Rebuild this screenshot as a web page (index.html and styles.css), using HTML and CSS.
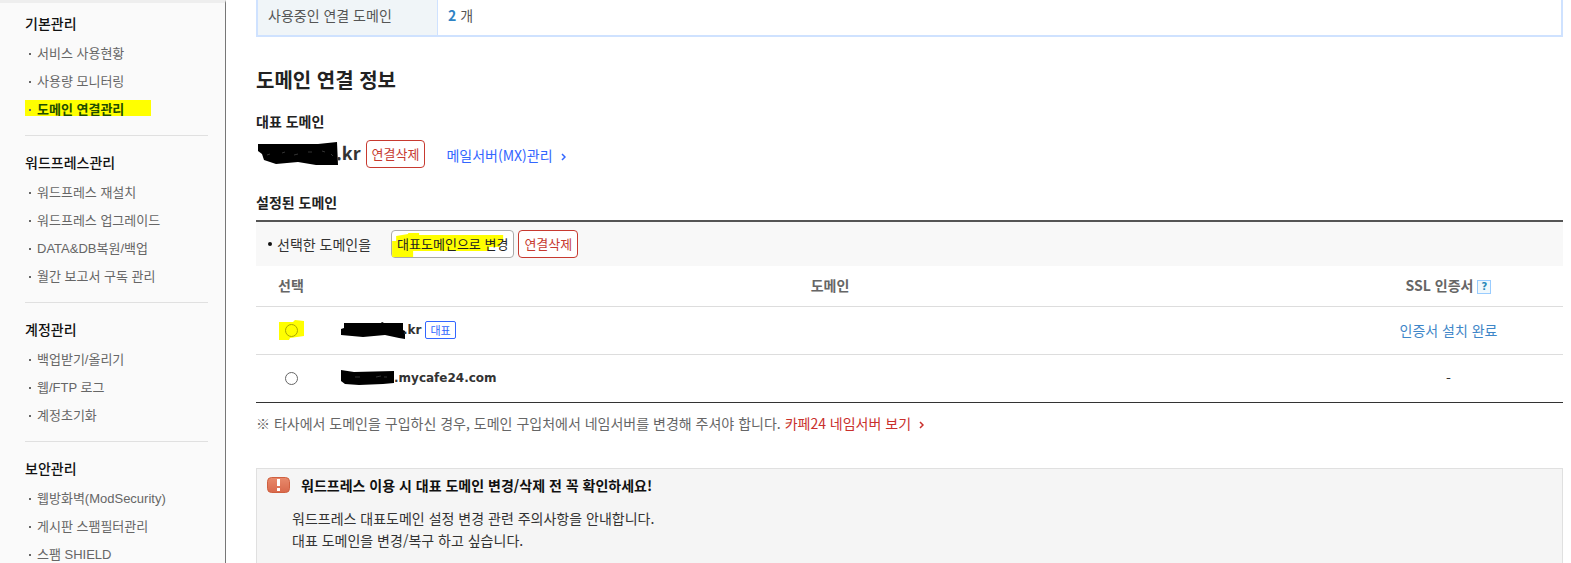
FILE: index.html
```html
<!DOCTYPE html>
<html lang="ko">
<head>
<meta charset="utf-8">
<title>도메인 연결관리</title>
<link rel="stylesheet" href="styles.css">
</head>
<body>
<div class="page">
  <nav class="sidebar">
    <section class="group">
      <h3>기본관리</h3>
      <ul>
        <li><a href="#">서비스 사용현황</a></li>
        <li><a href="#">사용량 모니터링</a></li>
        <li class="current"><a href="#">도메인 연결관리</a></li>
      </ul>
    </section>
    <section class="group">
      <h3>워드프레스관리</h3>
      <ul>
        <li><a href="#">워드프레스 재설치</a></li>
        <li><a href="#">워드프레스 업그레이드</a></li>
        <li><a href="#">DATA&amp;DB복원/백업</a></li>
        <li><a href="#">월간 보고서 구독 관리</a></li>
      </ul>
    </section>
    <section class="group">
      <h3>계정관리</h3>
      <ul>
        <li><a href="#">백업받기/올리기</a></li>
        <li><a href="#">웹/FTP 로그</a></li>
        <li><a href="#">계정초기화</a></li>
      </ul>
    </section>
    <section class="group">
      <h3>보안관리</h3>
      <ul>
        <li><a href="#">웹방화벽(ModSecurity)</a></li>
        <li><a href="#">게시판 스팸필터관리</a></li>
        <li><a href="#">스팸 SHIELD</a></li>
      </ul>
    </section>
  </nav>

  <main class="content">
    <table class="summary">
      <tr><th scope="row">사용중인 연결 도메인</th><td><strong>2</strong> 개</td></tr>
    </table>

    <h1>도메인 연결 정보</h1>

    <h2>대표 도메인</h2>
    <div class="primary">
      <svg class="redact" width="82" height="26" viewBox="0 0 82 26" aria-hidden="true"><path d="M0 3L50 3L60 3L79 1L80 24L58 24L40 21L18 23L6 19L4 13L0 10Z"/><path class="scratch" d="M9 14l3-1M24 12l3-1M36 14l4-1M50 11h4M64 10l3 1M73 13l2 2"/></svg>
      <strong>.kr</strong>
      <button type="button" class="btn danger">연결삭제</button>
      <a class="mx" href="#">메일서버(MX)관리<svg class="chev" width="5" height="8" viewBox="0 0 5 8" aria-hidden="true"><path d="M1 1l3 3-3 3"/></svg></a>
    </div>

    <h2>설정된 도메인</h2>
    <div class="toolbar">
      <span class="label">선택한 도메인을</span>
      <button type="button" class="btn change"><svg class="marker" viewBox="0 0 121 26" aria-hidden="true"><path d="M0 10H4V5L16 3V2H27V4H111V11H108V16H97V20H21V26H0Z"/></svg><span>대표도메인으로 변경</span></button>
      <button type="button" class="btn danger">연결삭제</button>
    </div>
    <table class="domains">
      <thead>
        <tr>
          <th class="pick" scope="col">선택</th>
          <th scope="col">도메인</th>
          <th class="ssl" scope="col"><span class="sslhead">SSL 인증서<button type="button" class="help" aria-label="SSL 인증서 도움말">?</button></span></th>
        </tr>
      </thead>
      <tbody>
        <tr>
          <td class="pick"><span class="marked"><svg class="marker" viewBox="0 0 25 20" aria-hidden="true"><path d="M0 2L14 2L16 0L25 1V16L11 18L10 20H0Z"/></svg><input type="radio" name="domain" aria-label="대표 도메인"></span></td>
          <td class="name"><div class="host"><svg class="redact" width="64" height="18" viewBox="0 0 64 18" aria-hidden="true"><path d="M3 2L40 2L41 1L43 2L62 2V9L64 10V18L58 17L44 14L22 16L0 14V8L3 7Z"/></svg><strong>.kr</strong><span class="tag">대표</span></div></td>
          <td class="ssl"><a href="#">인증서 설치 완료</a></td>
        </tr>
        <tr>
          <td class="pick"><input type="radio" name="domain" aria-label="mycafe24.com"></td>
          <td class="name"><div class="host"><svg class="redact" width="55" height="16" viewBox="0 0 55 16" aria-hidden="true"><path d="M0 0L13 2L53 1V13L42 14L18 15L4 14L0 11Z"/><path class="scratch" d="M14 7h5M35 7l5-1M43 7h3"/></svg><strong>.mycafe24.com</strong></div></td>
          <td class="ssl">-</td>
        </tr>
      </tbody>
    </table>
    <p class="note">※ 타사에서 도메인을 구입하신 경우, 도메인 구입처에서 네임서버를 변경해 주셔야 합니다. <a href="#">카페24 네임서버 보기<svg class="chev" width="5" height="8" viewBox="0 0 5 8" aria-hidden="true"><path d="M1 1l3 3-3 3"/></svg></a></p>

    <section class="notice">
      <h4><svg width="23" height="16" viewBox="0 0 23 16" aria-hidden="true"><defs><linearGradient id="warn" x2="0" y2="1"><stop offset="0" stop-color="#e88a6c"/><stop offset="1" stop-color="#d9694c"/></linearGradient></defs><rect x=".5" y=".5" width="22" height="15" rx="4" fill="url(#warn)" stroke="#cf6040"/><path d="M10 2h3v7h-3zM10 11h3v3h-3z" fill="#fff"/></svg>워드프레스 이용 시 대표 도메인 변경/삭제 전 꼭 확인하세요!</h4>
      <p>워드프레스 대표도메인 설정 변경 관련 주의사항을 안내합니다.</p>
      <p>대표 도메인을 변경/복구 하고 싶습니다.</p>
    </section>
  </main>
</div>
</body>
</html>
```

FILE: styles.css
```css
* { box-sizing: border-box; }
html { overflow: hidden; }
body {
  margin: 0;
  height: 100vh;
  overflow: hidden;
  background: #fff;
  color: #333;
  font: 14px/20px "Noto Sans CJK KR", sans-serif;
}
h1, h2, h3, h4, p, ul { margin: 0; padding: 0; }
ul { list-style: none; }
a { text-decoration: none; }
table { width: 100%; border-collapse: collapse; }
button { font: inherit; cursor: pointer; }

.page { display: flex; min-height: 100vh; }

/* Side menu */
.sidebar {
  flex: none;
  width: 226px;
  padding: 0 17px 0 25px;
  background: #fafafa;
  border-top: 3px solid #eee;
  border-right: 1px solid #777;
}
.group { padding: 16px 0 13px; border-bottom: 1px solid #e0e0e0; }
.group:first-child { padding-top: 10px; }
.group:last-child { border-bottom: 0; }
.group h3 { margin-bottom: 5px; font-size: 14px; font-weight: 500; color: #111; }
.group li { display: flex; align-items: center; height: 28px; }
.group a {
  display: flex;
  align-items: center;
  height: 16px;
  padding: 4px 0 0 4px;
  color: #666;
  font: 400 13px/16px "Liberation Sans", "Noto Sans CJK KR", sans-serif;
}
.group a::before { content: ""; width: 2px; height: 2px; margin-right: 6px; background: #666; }
.group .current a { width: 126px; background: #ff0; color: #1f4d00; font-weight: 700; }

/* Main column */
.content { flex: 1; min-width: 0; padding: 0 8px 0 30px; }
.summary { border: 2px solid #cfe2ff; border-top: 0; border-collapse: separate; border-spacing: 0; }
.summary th, .summary td { height: 35px; padding: 0 10px 6px; text-align: left; font-weight: 400; color: #555; }
.summary th { width: 180px; background: #f0f5f8; border-right: 1px solid #cfe2ff; }
.summary strong { color: #2e83c4; }

h1 { margin-top: 28px; font-size: 20px; line-height: 30px; font-weight: 700; color: #222; }
h2 { font-size: 14px; line-height: 20px; font-weight: 700; color: #222; }
h1 + h2 { margin-top: 16px; }
.primary { display: flex; align-items: center; height: 28px; margin: 9px 0 24px; }
.primary strong { margin-right: 5px; padding-bottom: 4px; font-size: 18px; font-weight: 700; }
.primary .redact { margin-left: 2px; margin-right: -4px; }
.redact { flex: none; fill: #000; }
.scratch { fill: none; stroke: #333; stroke-width: 1; }
.mx { margin-left: 21px; padding-top: 2px; color: #36f; }
.chev { margin-left: 8px; fill: none; stroke: currentColor; stroke-width: 1.5; }

.btn {
  position: relative;
  height: 28px;
  padding: 0 5px 1px;
  border: 1px solid #aaa;
  border-radius: 4px;
  background: #fff;
  color: #222;
  font-size: 13px;
  line-height: 18px;
}
.btn.danger { border-color: #c73a30; color: #c73a30; }
.btn span { position: relative; }
.marker { position: absolute; inset: 0; width: 100%; height: 100%; fill: #ff0; }

.toolbar {
  display: flex;
  align-items: center;
  gap: 4px;
  height: 46px;
  margin-top: 8px;
  padding-left: 12px;
  border-top: 2px solid #555;
  background: #f8f8f8;
}
.label { display: flex; align-items: center; margin-right: 16px; }
.label::before { content: ""; width: 4px; height: 4px; margin-right: 5px; border-radius: 50%; background: #111; }

.domains { border-bottom: 1px solid #333; table-layout: fixed; }
.domains th { height: 40px; padding: 0 0 2px; font-weight: 700; color: #666; }
.domains td { height: 48px; padding: 0; border-top: 1px solid #ddd; }
.domains .pick { width: 70px; text-align: center; }
.domains .ssl { width: 229px; text-align: center; }
.domains td.name { padding-left: 15px; }
.sslhead { display: inline-flex; align-items: center; gap: 4px; }
.help {
  width: 14px;
  height: 14px;
  margin-top: 4px;
  padding: 0;
  border: 1px solid #9cf;
  background: #f0f8fc;
  color: #2889b8;
  font: 700 10px/12px "DejaVu Sans", sans-serif;
}
.ssl a { color: #3e86c8; }
.host { display: flex; align-items: center; }
.host strong { font: 700 12px/20px "DejaVu Sans", sans-serif; }
.host .redact { margin-right: -2px; }
.tag {
  margin-left: 4px;
  padding: 0 4px;
  border: 1px solid #36f;
  border-radius: 2px;
  color: #36f;
  font-size: 11px;
  line-height: 16px;
}
.domains input {
  display: block;
  appearance: none;
  position: relative;
  width: 13px;
  height: 13px;
  margin: 0 auto;
  border: 1px solid #666;
  border-radius: 50%;
}
.marked { display: flex; align-items: center; position: relative; width: 25px; height: 20px; margin: 0 auto; }
.marked input { border-color: #aaa800; }

.note { margin-top: 10px; color: #666; }
.note a { color: #c9302c; }

.notice { margin-top: 35px; padding: 6px 10px 24px; min-height: 120px; border: 1px solid #e0e0e0; background: #f5f5f5; }
.notice h4 { display: flex; align-items: center; gap: 11px; margin-bottom: 12px; font-size: 14px; font-weight: 700; color: #111; }
.notice p { padding-left: 25px; line-height: 22px; }
```
